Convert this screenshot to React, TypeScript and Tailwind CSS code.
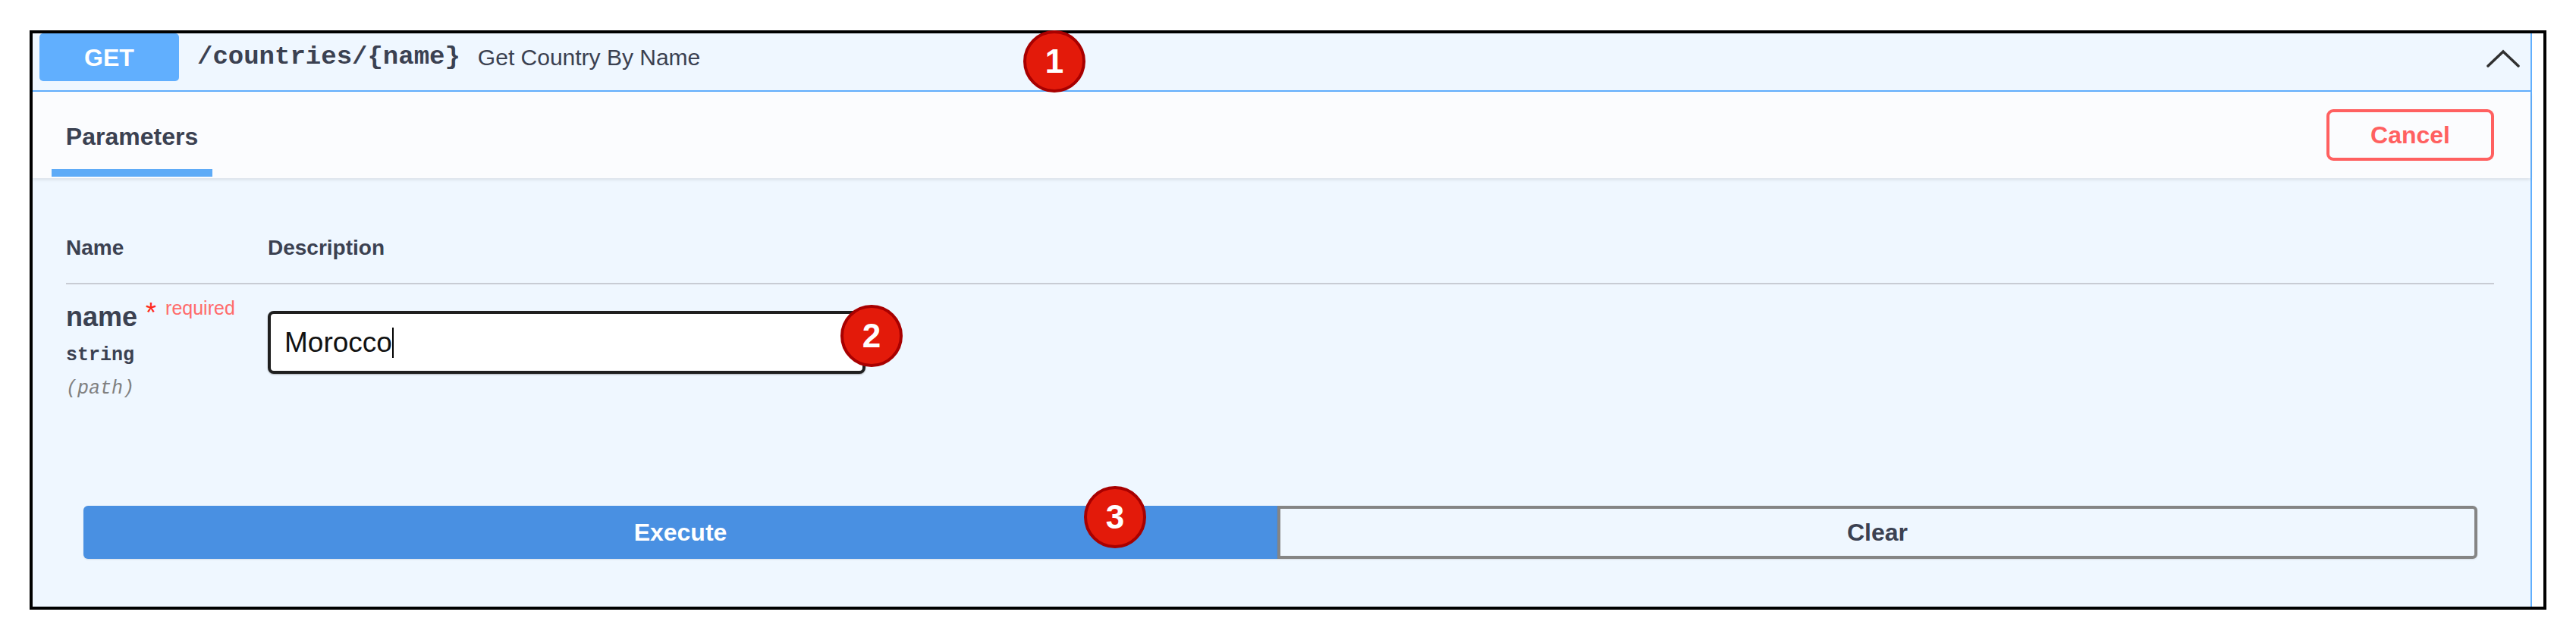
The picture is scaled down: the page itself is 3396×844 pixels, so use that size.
import React from 'react';

const sans = "font-['Liberation_Sans',Arial,sans-serif]";
const mono = "font-['Liberation_Mono','Courier_New',monospace]";

const Marker = ({ n, className }: { n: number; className: string }) => (
  <div
    className={`absolute w-[82px] h-[82px] rounded-full bg-[#e31a0a] border-[4px] border-[#a80000] flex items-center justify-center text-white font-bold text-[44px] leading-none ${className}`}
  >
    {n}
  </div>
);

const App = () => {
  return (
    <div className={`w-[3396px] h-[844px] bg-white pt-[40px] pl-[39px] ${sans}`}>
      <div className="relative w-[3318px] h-[764px] border-4 border-black bg-white">
        {/* opblock */}
        <div className="w-[3295px] h-full bg-[#eff7ff] border-r-2 border-[#61affe] flex flex-col">
          {/* Summary */}
          <div className="h-[77px] flex items-start border-b-2 border-[#61affe]">
            <div className="ml-[9px] w-[184px] h-[63px] rounded-[5px] bg-[#61affe] flex items-center justify-center text-white font-bold text-[32px]">
              GET
            </div>
            <div className="h-[63px] flex items-center">
              <span className={`ml-[24px] text-[34px] font-bold text-[#3b4151] ${mono}`}>/countries/{'{name}'}</span>
              <span className="ml-[23px] text-[30px] text-[#3b4151]">Get Country By Name</span>
            </div>
            <div className="ml-auto mr-[14px] mt-[20px]">
              <svg width="44" height="26" viewBox="0 0 44 26">
                <polyline points="2,23 22,4 42,23" fill="none" stroke="#303030" strokeWidth="3.5" strokeLinecap="round" strokeLinejoin="miter" />
              </svg>
            </div>
          </div>

          {/* Section header */}
          <div className="h-[114px] bg-[#fbfcfe] shadow-[0_2px_4px_rgba(0,0,0,0.1)] flex items-center justify-between relative">
            <div className="ml-[25px] w-[212px] h-full flex flex-col items-center">
              <div className="pt-[43px] text-[32px] leading-[32px] font-bold text-[#3b4151]">Parameters</div>
              <div className="flex-1" />
              <div className="w-full h-[10px] bg-[#5eabf7] mb-[2px]" />
            </div>
            <button className="mr-[48px] w-[221px] h-[68px] border-[4px] border-[#ff6060] rounded-[9px] text-[#ff6060] font-bold text-[32px]">
              Cancel
            </button>
          </div>

          {/* Parameters table */}
          <div className="pl-[44px] pr-[48px]">
            <div className="flex pt-[78px] pb-[32px] border-b-2 border-[#c8ccd4] text-[28px] leading-[28px] font-bold text-[#3b4151]">
              <div className="w-[266px]">Name</div>
              <div>Description</div>
            </div>
            <div className="flex items-start">
              <div className="w-[266px] pt-[25px] flex flex-col">
                <div className="flex items-start h-[36px]">
                  <span className="text-[36px] leading-[36px] font-bold text-[#3b4151]">name</span>
                  <span className="ml-[11px] relative top-[-5px] text-[36px] leading-[36px] text-[#ff2a1a]">*</span>
                  <span className="ml-[12px] relative top-[-6px] text-[25px] leading-[25px] text-[#ff6b6b]">required</span>
                </div>
                <div className={`mt-[16px] text-[25px] leading-[34px] font-bold text-[#3b4151] ${mono}`}>string</div>
                <div className={`mt-[10px] text-[25px] leading-[34px] italic text-[#808080] ${mono}`}>(path)</div>
              </div>
              <div className="mt-[35px] w-[788px] h-[83px] bg-white border-[4px] border-[#1f1f1f] rounded-[8px] flex items-center pl-[18px] shadow-[0_1px_2px_rgba(0,0,0,0.3)]">
                <span className="text-[37px] text-[#111]">Morocco</span>
                <span className="w-[2px] h-[40px] bg-black" />
              </div>
            </div>
          </div>

          {/* Buttons */}
          <div className="mt-[137px] ml-[67px] mr-[70px] flex h-[70px]">
            <button className="flex-1 bg-[#4990e2] rounded-l-[6px] text-white font-bold text-[32px] shadow-[0_1px_2px_rgba(0,0,0,0.1)]">
              Execute
            </button>
            <button className="flex-1 border-[4px] border-[#858585] rounded-r-[6px] text-[#3b4151] font-bold text-[32px] shadow-[0_1px_2px_rgba(0,0,0,0.1)]">
              Clear
            </button>
          </div>
        </div>

        {/* Callouts */}
        <Marker n={1} className="left-[1306px] top-[-4px]" />
        <Marker n={2} className="left-[1065px] top-[358px]" />
        <Marker n={3} className="left-[1386px] top-[597px]" />
      </div>
    </div>
  );
};

export default App;
